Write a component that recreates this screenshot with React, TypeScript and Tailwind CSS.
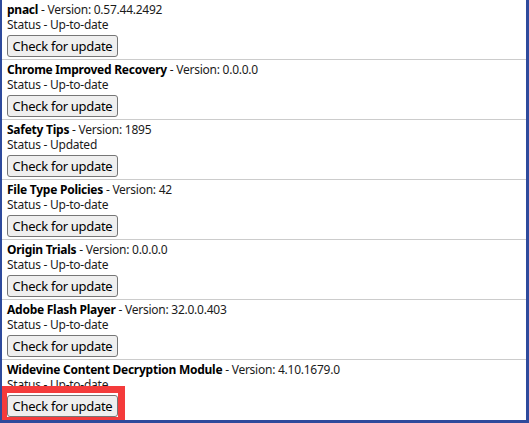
import React from "react";

/**
 * chrome://components – lista de componentes com botão de atualização
 */

type Item = {
  name: string;
  version: string;
  status: string;
};

const items: Item[] = [
  { name: "pnacl", version: "0.57.44.2492", status: "Up-to-date" },
  { name: "Chrome Improved Recovery", version: "0.0.0.0", status: "Up-to-date" },
  { name: "Safety Tips", version: "1895", status: "Updated" },
  { name: "File Type Policies", version: "42", status: "Up-to-date" },
  { name: "Origin Trials", version: "0.0.0.0", status: "Up-to-date" },
  { name: "Adobe Flash Player", version: "32.0.0.403", status: "Up-to-date" },
  { name: "Widevine Content Decryption Module", version: "4.10.1679.0", status: "Up-to-date" },
];

function UpdateButton({ highlight }: { highlight?: boolean }) {
  return (
    <span className="relative inline-block">
      <button className="h-[22px] w-[111px] rounded-[3px] border border-[#767676] bg-[#efefef] text-[13px] leading-[20px] tracking-[-0.3px] text-black">
        Check for update
      </button>
      {highlight && (
        <span className="pointer-events-none absolute -top-[9px] -left-[7px] -right-[7px] -bottom-[7px] border-[7px] border-[#f43b3b]" />
      )}
    </span>
  );
}

export default function App() {
  return (
    <div
      className="h-[423px] w-[529px] overflow-hidden border-l-2 border-r-[3px] border-b-[3px] border-[#2e4a9c] bg-white text-[#1b1b1b]"
      style={{ fontFamily: '"Noto Sans", "Open Sans", sans-serif' }}
    >
      <div className="-mt-[1px]">
        {items.map((it, i) => (
          <div
            key={it.name}
            className={
              "h-[60px] pl-[5px] " + (i === 0 ? "border-t border-transparent" : "border-t border-[#cccccc]")
            }
          >
            <div className="pt-[2px] text-[12px] leading-[15px] tracking-[-0.25px]">
              <span className="font-bold text-black">{it.name}</span> - Version: {it.version}
            </div>
            <div className="text-[12px] leading-[15px] tracking-[-0.25px]">Status - {it.status}</div>
            <div className="mt-[3px] leading-none">
              <UpdateButton highlight={i === items.length - 1} />
            </div>
          </div>
        ))}
      </div>
    </div>
  );
}
